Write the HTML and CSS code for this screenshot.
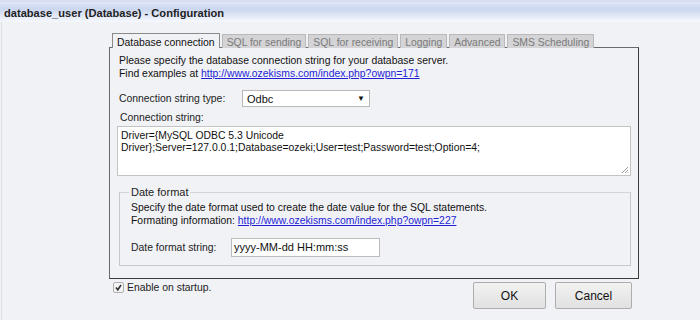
FILE: index.html
```html
<!DOCTYPE html>
<html lang="en">
<head>
    <meta charset="UTF-8">
    <title>database_user (Database) - Configuration</title>
    <link rel="stylesheet" href="styles.css">
</head>
<body>
    <div class="titlebar">database_user (Database) - Configuration</div>

    <div class="window">
        <div class="dialog">
            <div class="tabs">
                <span class="tab active">Database connection</span>
                <span class="tab">SQL for sending</span>
                <span class="tab">SQL for receiving</span>
                <span class="tab">Logging</span>
                <span class="tab">Advanced</span>
                <span class="tab">SMS Scheduling</span>
            </div>

            <div class="panel">
                <p class="intro">
                    Please specify the database connection string for your database server.<br>
                    Find examples at <a href="#">http://www.ozekisms.com/index.php?owpn=171</a>
                </p>

                <div class="row">
                    <label class="row-label">Connection string type:</label>
                    <div class="select">
                        <span>Odbc</span>
                        <span class="arrow">&#9660;</span>
                    </div>
                </div>

                <div class="conn-label">Connection string:</div>
                <div class="textarea">Driver={MySQL ODBC 5.3 Unicode<br>Driver};Server=127.0.0.1;Database=ozeki;User=test;Password=test;Option=4;
                    <svg class="grip" width="8" height="8" viewBox="0 0 8 8">
                        <path d="M7 1 L1 7 M7 4 L4 7 M7 6.5 L6.5 7" stroke="#999" stroke-width="1"/>
                    </svg>
                </div>

                <fieldset class="date-format">
                    <legend>Date format</legend>
                    <p class="intro">
                        Specify the date format used to create the date value for the SQL statements.<br>
                        Formating information: <a href="#">http://www.ozekisms.com/index.php?owpn=227</a>
                    </p>
                    <div class="row date-row">
                        <label class="row-label">Date format string:</label>
                        <div class="input">yyyy-MM-dd HH:mm:ss</div>
                    </div>
                </fieldset>
            </div>

            <div class="footer">
                <label class="check">
                    <span class="box">
                        <svg width="9" height="9" viewBox="0 0 9 9">
                            <path d="M2 4.5 L3.8 6.8 L7 2" fill="none" stroke="#333" stroke-width="1.6"/>
                        </svg>
                    </span>
                    Enable on startup.
                </label>
                <div class="buttons">
                    <button class="btn ok">OK</button>
                    <button class="btn">Cancel</button>
                </div>
            </div>
        </div>
    </div>
</body>
</html>
```

FILE: styles.css
```css
body {
    margin: 0;
    background-color: #f1f2f6;
    font-family: "Liberation Sans", Arial, sans-serif;
    font-size: 10.4px;
    color: #111;
}

.titlebar {
    height: 22px;
    box-sizing: border-box;
    padding: 5px 0 0 4px;
    font-size: 11.1px;
    font-weight: bold;
    color: #222;
    border-top: 2px solid #d9dfee;
    background: linear-gradient(to bottom, #dfe6f6 0%, #cbd7f0 35%, #f6f8fc 100%);
}

.window {
    height: 298px;
    border-left: 1px solid #dde0e8;
    margin-left: 1px;
}

.dialog {
    margin-left: 107px;
    width: 530px;
    padding-top: 11px;
}

.tabs {
    display: flex;
    gap: 2px;
    margin-left: 3px;
    height: 15px;
    position: relative;
    z-index: 1;
}

.tab {
    height: 14px;
    box-sizing: border-box;
    padding: 1px 4px 0;
    background-color: #d4d4d6;
    color: #7a7a7a;
    border: 1px solid #b9b9bb;
    border-bottom: none;
    line-height: 13px;
    margin-top: 1px;
    font-size: 10.4px;
}

.tab.active {
    height: 15px;
    margin-top: 0;
    background-color: #f1f2f6;
    color: #111;
    border-color: #8a8a8a;
    padding-top: 2px;
}

.panel {
    border: 1px solid #6a6a6a;
    border-right-color: #3c3c3c;
    border-bottom-color: #3c3c3c;
    margin-top: -1px;
    height: 232px;
    box-sizing: border-box;
    padding: 7px 8px 0 9px;
}

.intro {
    margin: 0;
    line-height: 12.5px;
}

a {
    color: #1f1fd6;
}

.row {
    display: flex;
    align-items: center;
    margin-top: 10px;
}

.row-label {
    width: 123px;
    color: #222;
}

.select {
    width: 128px;
    height: 17px;
    box-sizing: border-box;
    border: 1px solid #b8b8b8;
    background-color: #fff;
    display: flex;
    justify-content: space-between;
    align-items: center;
    padding: 0 4px;
    font-size: 11px;
}

.arrow {
    font-size: 8px;
    color: #111;
}

.conn-label {
    margin-top: 5px;
    margin-left: 1px;
    color: #222;
}

.textarea {
    position: relative;
    margin: 3px 0 0 -2px;
    width: 514px;
    height: 50px;
    box-sizing: border-box;
    border: 1px solid #c4c4c4;
    background-color: #fff;
    padding: 3px 3px;
    line-height: 12px;
}

.grip {
    position: absolute;
    right: 1px;
    bottom: 1px;
}

.date-format {
    margin: 10px 0 0 0;
    width: 512px;
    box-sizing: border-box;
    border: 1px solid #c8c8cc;
    border-top-color: #d4d4d8;
    padding: 0 10px 6px 11px;
    height: 80px;
}

.date-format legend {
    padding: 0 2px;
    margin-left: -2px;
    color: #222;
    font-size: 11px;
}

.date-format .intro {
    margin-top: 4px;
}

.date-row {
    margin-top: 11px;
}

.date-row .row-label {
    width: 100px;
}

.input {
    width: 149px;
    height: 19px;
    box-sizing: border-box;
    border: 1px solid #bcbcbc;
    background-color: #fff;
    padding: 2px 2px;
    font-size: 11px;
}

.footer {
    display: flex;
    justify-content: space-between;
    align-items: flex-start;
    padding-top: 3px;
}

.check {
    display: flex;
    align-items: center;
    gap: 3px;
    margin-left: 4px;
    color: #222;
}

.box {
    width: 9px;
    height: 9px;
    border: 1px solid #b0b0b0;
    border-radius: 2px;
    background-color: #f4f4f4;
    display: flex;
}

.buttons {
    display: flex;
    gap: 9px;
    margin-right: 7px;
}

.btn {
    width: 73px;
    height: 27px;
    border: 1px solid #adadad;
    border-radius: 2px;
    background: linear-gradient(to bottom, #f2f2f2, #e1e1e1);
    font-family: "Liberation Sans", Arial, sans-serif;
    font-size: 12px;
    color: #111;
}

.btn + .btn {
    width: 77px;
}
```
